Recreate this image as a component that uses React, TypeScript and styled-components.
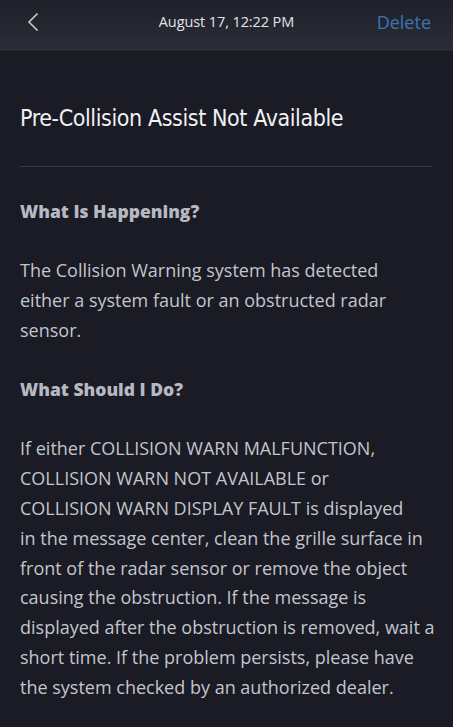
import { styled, createGlobalStyle } from "styled-components";

const GlobalStyle = createGlobalStyle`
  html, body {
    margin: 0;
    padding: 0;
    background-color: #1a1b24;
  }
  * {
    box-sizing: border-box;
  }
`;

// lines are kept as they wrap in the app
const sections = [
  {
    heading: "What Is Happening?",
    lines: [
      "The Collision Warning system has detected",
      "either a system fault or an obstructed radar",
      "sensor.",
    ],
  },
  {
    heading: "What Should I Do?",
    lines: [
      "If either COLLISION WARN MALFUNCTION,",
      "COLLISION WARN NOT AVAILABLE or",
      "COLLISION WARN DISPLAY FAULT is displayed",
      "in the message center, clean the grille surface in",
      "front of the radar sensor or remove the object",
      "causing the obstruction. If the message is",
      "displayed after the obstruction is removed, wait a",
      "short time. If the problem persists, please have",
      "the system checked by an authorized dealer.",
    ],
  },
];

export default function App() {
  return (
    <Page>
      <GlobalStyle />
      <Header>
        <BackButton aria-label="Back">
          <svg width="12" height="20" viewBox="0 0 12 20" fill="none">
            <path d="M10.5 1.5 L2 10 L10.5 18.5" stroke="#c9cbd3" strokeWidth="1.6" />
          </svg>
        </BackButton>
        <DateText>August 17, 12:22 PM</DateText>
        <DeleteButton>Delete</DeleteButton>
      </Header>
      <Content>
        <Title>Pre-Collision Assist Not Available</Title>
        <Divider />
        {sections.map((s) => (
          <Section key={s.heading}>
            <Heading>{s.heading}</Heading>
            <Paragraph>
              {s.lines.map((l) => (
                <Line key={l}>{l}</Line>
              ))}
            </Paragraph>
          </Section>
        ))}
      </Content>
    </Page>
  );
}

const Page = styled.div`
  width: 453px;
  min-height: 727px;
  background-color: #1a1b24;
  font-family: "Open Sans", "Liberation Sans", sans-serif;
`;

const Header = styled.div`
  height: 52px;
  display: grid;
  grid-template-columns: 1fr auto 1fr;
  align-items: center;
  padding: 0 22px 8px 22px;
  background: linear-gradient(180deg, #1f2029 0%, #2b2e37 100%);
  border-bottom: 1px solid #16171e;
`;

const BackButton = styled.button`
  justify-self: start;
  margin-left: 5px;
  background: none;
  border: none;
  padding: 0;
  display: flex;
  align-items: center;
  cursor: pointer;
`;

const DateText = styled.span`
  color: #e2e3e8;
  font-size: 14.5px;
  letter-spacing: -0.1px;
`;

const DeleteButton = styled.button`
  justify-self: end;
  background: none;
  border: none;
  padding: 0;
  color: #3a75b2;
  font-family: inherit;
  font-size: 18px;
`;

const Content = styled.div`
  padding: 0 21px 0 20px;
`;

const Title = styled.h1`
  margin: 0;
  padding: 50px 0 32px;
  font-family: "DejaVu Sans Condensed", "DejaVu Sans", sans-serif;
  font-weight: normal;
  font-size: 23px;
  letter-spacing: -0.4px;
  color: #f0f1f4;
  line-height: 32px;
`;

const Divider = styled.hr`
  margin: 0;
  border: none;
  height: 1px;
  background-color: #363844;
`;

const Section = styled.section`
  padding-top: 31px;
`;

const Heading = styled.h2`
  margin: 0 0 32px;
  font-size: 17.5px;
  font-weight: 800;
  color: #b6b8c2;
  line-height: 26px;
`;

const Paragraph = styled.p`
  margin: 0;
  font-size: 18px;
  line-height: 29.8px;
  color: #c3c5cd;
`;

const Line = styled.span`
  display: block;
  white-space: nowrap;
`;
